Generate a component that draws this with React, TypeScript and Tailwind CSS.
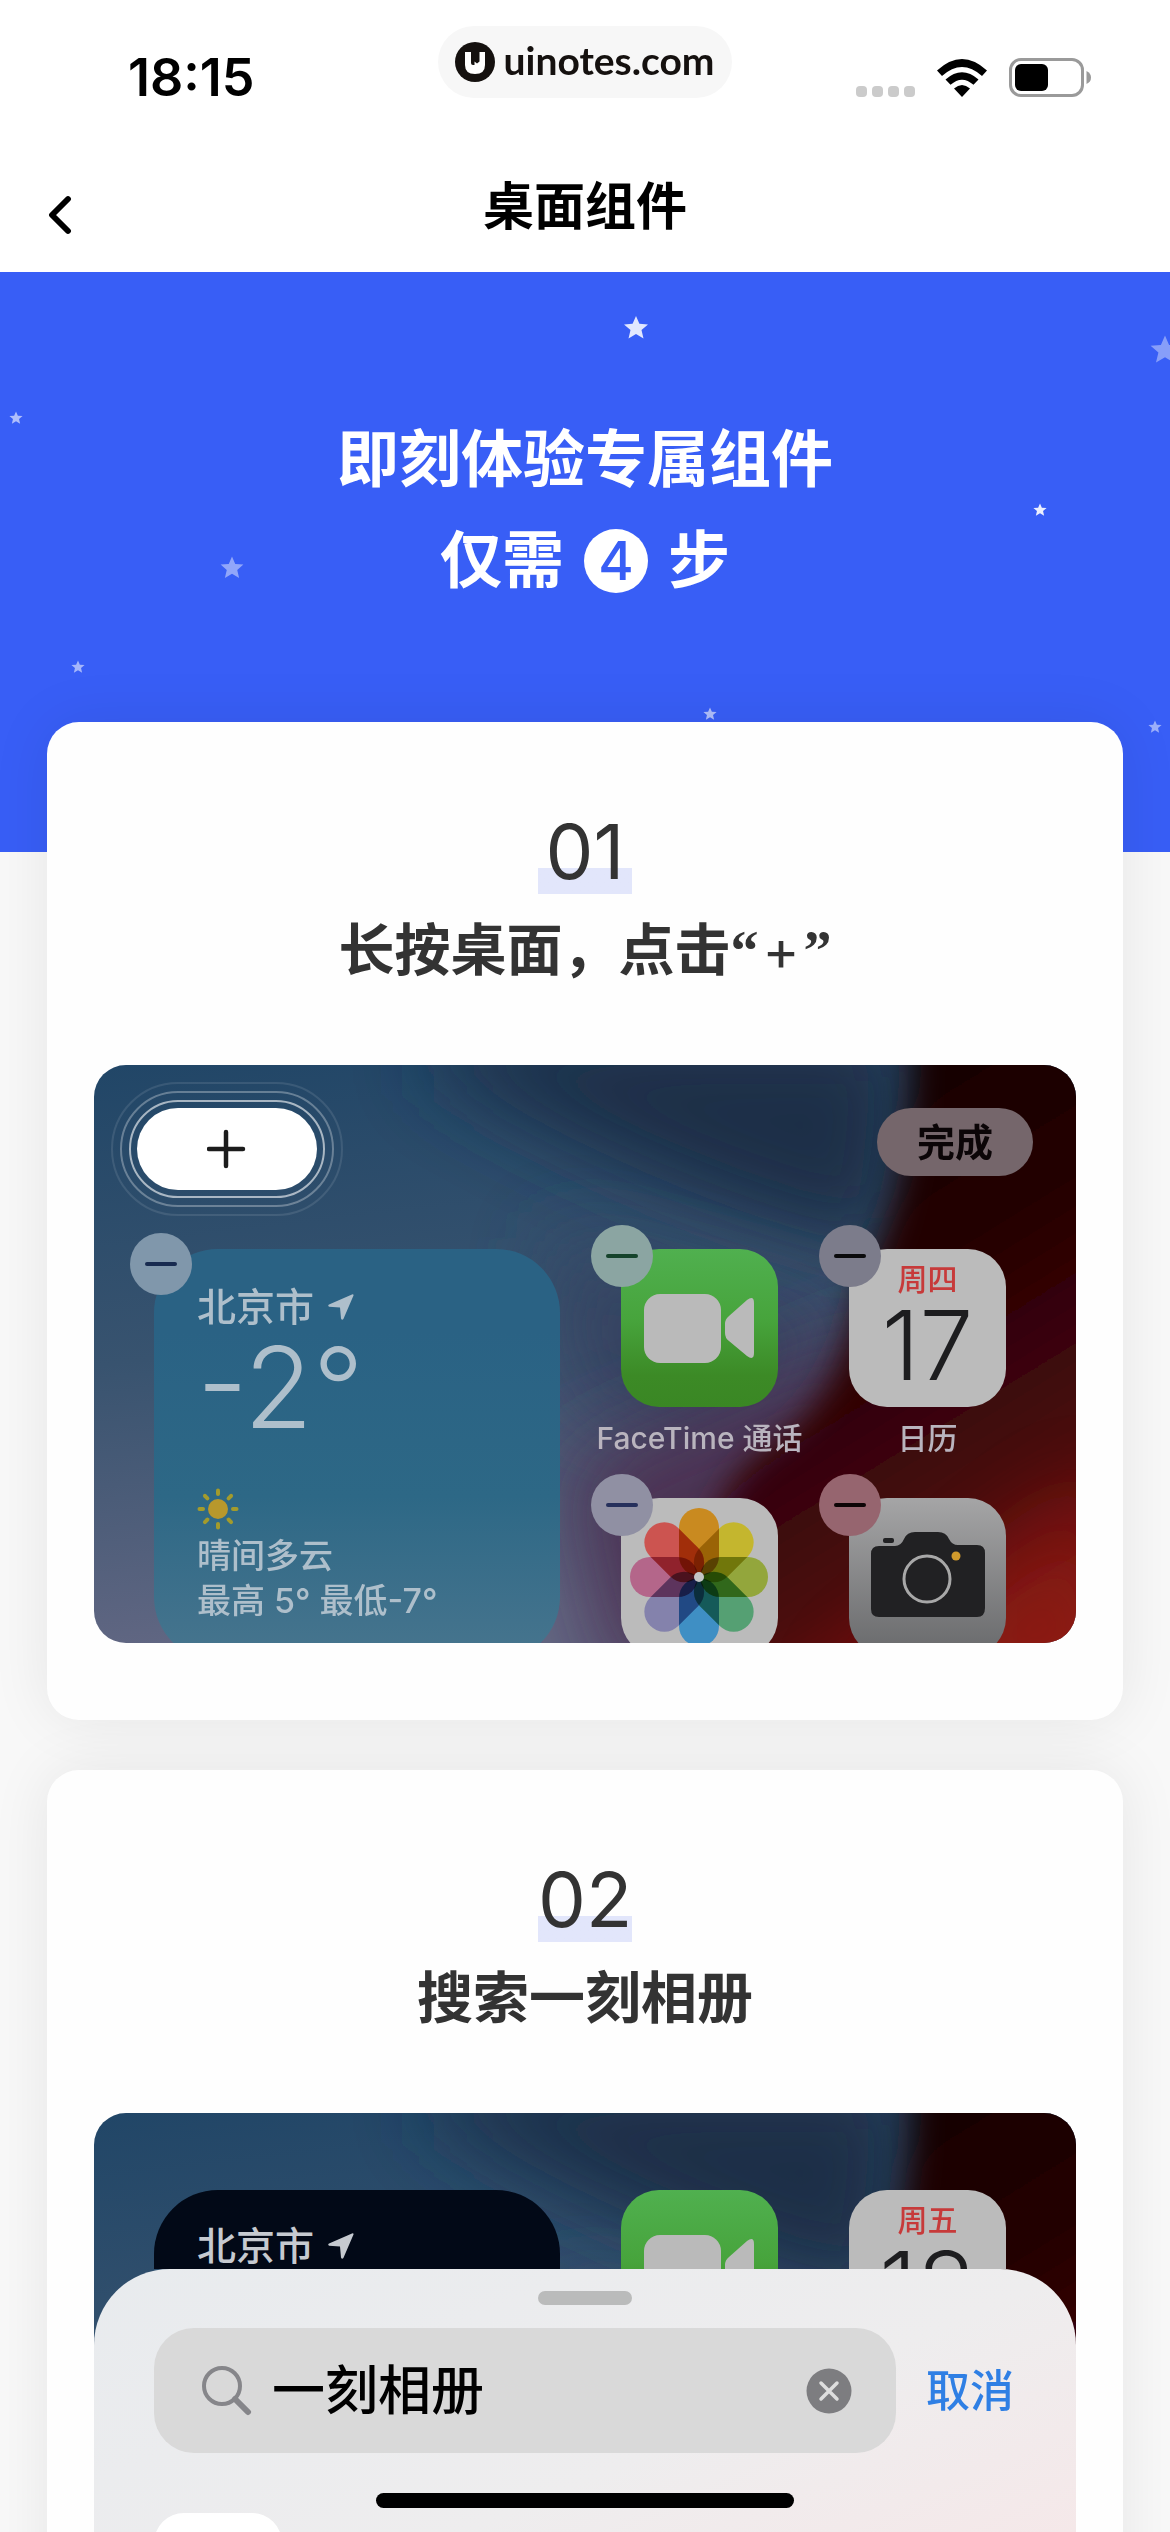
import type { ReactNode } from "react";
import { ChevronLeft } from "lucide-react";

/* Widget tutorial page: status bar, title bar, blue hero and the step cards.
   Each card shows a small dimmed home screen. */

const STAR = "M0 -12 L3.4 -4.2 L12 -3.6 L5.5 2 L7.5 10.5 L0 6 L-7.5 10.5 L-5.5 2 L-12 -3.6 L-3.4 -4.2 Z";

const STARS = [
  { x: 636, y: 56, s: 1, o: 0.85 },
  { x: 1165, y: 78, s: 1.2, o: 0.4 },
  { x: 16, y: 146, s: 0.55, o: 0.6 },
  { x: 1040, y: 238, s: 0.55, o: 0.9 },
  { x: 232, y: 296, s: 0.95, o: 0.45 },
  { x: 78, y: 395, s: 0.55, o: 0.55 },
  { x: 710, y: 442, s: 0.55, o: 0.6 },
  { x: 1155, y: 455, s: 0.55, o: 0.5 },
];

const PETALS = ["#c98a20", "#c4b62e", "#93a63c", "#55a073", "#3f8fc4", "#8482ac", "#b4668a", "#cc5450"];

function StatusBar() {
  return (
    <div className="grid grid-cols-[1fr_auto_1fr] items-start pt-[26px]">
      <span className="pl-32 pt-[22px] text-[52px] leading-[60px] font-semibold">18:15</span>
      <div className="flex h-[72px] items-center gap-2 rounded-full bg-[#f7f7f7] px-[17px]">
        <svg width="40" height="40" viewBox="0 0 40 40" aria-hidden="true">
          <circle cx="20" cy="20" r="20" fill="#15110f" />
          <path d="M10 10h6v11q0 2 2 2h1.500v-3.500l2.500 2 2.500-2v-9.500h5.500v13q0 9-10 9t-10-9z" fill="#fff" />
          <path d="M20 10v9.500h2.200v-9.500z" fill="#15110f" />
        </svg>
        <span className="pb-1 font-['Lato',sans-serif] text-[39px] leading-[48px] font-bold text-[#15110f]">uinotes.com</span>
      </div>
      <div className="flex items-center justify-end gap-[22px] pt-8 pr-[78px]">
        <div className="flex gap-[5px] pt-[26px]">
          {[0, 1, 2, 3].map((i) => (
            <span key={i} className="h-[11px] w-[11px] rounded-[4px] bg-[#cbcbcb]" />
          ))}
        </div>
        <svg width="50" height="38" viewBox="0 0 50 38" aria-label="Wi-Fi">
          <path d="M0 11.500Q25-11.500 50 11.500L45 17Q25-1 5 17Z" />
          <path d="M8.500 20.500Q25 6 41.500 20.500L36.500 25.800Q25 15.500 13.500 25.800Z" />
          <path d="M17 29.500Q25 22.500 33 29.500L25 38Z" />
        </svg>
        <svg width="83" height="40" viewBox="0 0 83 40" aria-label="Battery">
          <rect x="1.500" y="1.500" width="72" height="36" rx="10.500" fill="none" stroke="#9a9a9a" strokeWidth="3" />
          <rect x="6" y="6" width="33" height="27" rx="6" />
          <path d="M77.500 13v13q4.500-2 4.500-6.500t-4.500-6.500z" fill="#9a9a9a" />
        </svg>
      </div>
    </div>
  );
}

function TitleBar() {
  return (
    <div className="grid grid-cols-[1fr_auto_1fr] items-center pt-[59px] pb-[25px]">
      <button type="button" aria-label="返回" className="ml-7 w-16 pt-4">
        <ChevronLeft size={64} strokeWidth={2.2} />
      </button>
      <h1 className="text-[51px] leading-[72px] font-semibold">桌面组件</h1>
    </div>
  );
}

function Hero() {
  return (
    <section className="relative bg-[#385ef6] pt-[137px] pb-[241px] text-center text-[62px] leading-[101px] font-semibold text-white">
      <svg
        className="absolute inset-0 h-full w-full"
        viewBox="0 0 1170 580"
        preserveAspectRatio="xMidYMin slice"
        aria-hidden="true"
      >
        {STARS.map((s) => (
          <path key={s.x} d={STAR} fill="#fff" opacity={s.o} transform={`translate(${s.x} ${s.y}) scale(${s.s})`} />
        ))}
      </svg>
      <p>即刻体验专属组件</p>
      <p className="flex items-center justify-center gap-5">
        <span>仅需</span>
        <span className="h-16 w-16 rounded-full bg-white text-[54px] leading-16 font-medium text-[#385ef6]">4</span>
        <span>步</span>
      </p>
    </section>
  );
}

function Wallpaper({ id }: { id: string }) {
  return (
    <svg
      className="absolute inset-0 h-full w-full"
      viewBox="0 0 981 578"
      preserveAspectRatio="none"
      aria-hidden="true"
    >
      <defs>
        <linearGradient id={`${id}-base`} x1="0" y1="0" x2="0.2" y2="1">
          <stop offset="0" stopColor="#214667" />
          <stop offset="0.5" stopColor="#38536f" />
          <stop offset="1" stopColor="#626783" />
        </linearGradient>
        <linearGradient id={`${id}-red`} x1="0.4" y1="0" x2="0.8" y2="1">
          <stop offset="0" stopColor="#120000" />
          <stop offset="0.35" stopColor="#240104" />
          <stop offset="0.7" stopColor="#4b0a0b" />
          <stop offset="1" stopColor="#981b12" />
        </linearGradient>
        <filter id={`${id}-wide`} x="-50%" y="-50%" width="200%" height="200%">
          <feGaussianBlur stdDeviation="42" />
        </filter>
        <filter id={`${id}-soft`} x="-20%" y="-20%" width="140%" height="140%">
          <feGaussianBlur stdDeviation="16" />
        </filter>
      </defs>
      <rect width="981" height="578" fill={`url(#${id}-base)`} />
      <path d="M340 -40L820 -40L800 190Q600 150 340 0Z" fill="#1b2d46" filter={`url(#${id}-wide)`} />
      <path d="M460 170L760 250L640 400L470 330Z" fill="#364260" filter={`url(#${id}-wide)`} />
      <path d="M470 400L820 250L760 420L620 620L520 620Z" fill="#4b3352" filter={`url(#${id}-wide)`} />
      <path
        d="M815 -40Q820 120 765 220Q750 320 690 370Q610 420 610 520L600 640H1040V-40Z"
        fill={`url(#${id}-red)`}
        filter={`url(#${id}-soft)`}
      />
      <path d="M1000 420Q900 500 740 640H1040Z" fill="#8f1a13" opacity="0.7" filter={`url(#${id}-wide)`} />
    </svg>
  );
}

function RemoveButton({ className }: { className: string }) {
  return (
    <button
      type="button"
      aria-label="移除"
      className={`absolute flex h-[62px] w-[62px] items-center justify-center rounded-full ${className}`}
    >
      <span className="h-1 w-8 rounded-full bg-current" />
    </button>
  );
}

function LocationArrow() {
  return (
    <svg width="26" height="26" viewBox="0 0 26 26" fill="currentColor" aria-hidden="true">
      <path d="M25.500 1.500Q25.800 0 24 .4L1 10.500Q-.6 11.800 1.200 12.800L12 13.500L13 24.500Q14 26.600 15.400 25Z" />
    </svg>
  );
}

function City() {
  return (
    <p className="flex items-center gap-[14px] text-[39px] leading-[48px] font-medium">
      北京市
      <LocationArrow />
    </p>
  );
}

function FaceTimeIcon() {
  return (
    <svg className="rounded-[38px]" width="157" height="158" viewBox="0 0 157 158" aria-label="FaceTime">
      <defs>
        <linearGradient id="ft" x1="0" y1="0" x2="0" y2="1">
          <stop offset="0" stopColor="#50b04f" />
          <stop offset="0.45" stopColor="#47a43c" />
          <stop offset="0.8" stopColor="#3c8a26" />
          <stop offset="1" stopColor="#3a8724" />
        </linearGradient>
      </defs>
      <rect width="157" height="158" fill="url(#ft)" />
      <rect x="23" y="45" width="77" height="69" rx="16" fill="#bababa" />
      <path
        d="M104 75Q104 70 108 67L126 51Q133 46 133 54V104Q133 112 126 107L108 92Q104 89 104 84Z"
        fill="#bababa"
      />
    </svg>
  );
}

function CalendarIcon({ weekday, day }: { weekday: string; day: string }) {
  return (
    <div className="flex h-[158px] w-[157px] flex-col items-center rounded-[38px] bg-[#bbbbbb]">
      <span className="pt-3 text-[30px] leading-9 font-medium text-[#c73a3a]">{weekday}</span>
      <span className="text-[96px] leading-[96px] font-light text-[#1d1d1f]">{day}</span>
    </div>
  );
}

function PhotosIcon() {
  return (
    <svg className="rounded-[38px]" width="157" height="158" viewBox="0 0 157 158" aria-label="照片">
      <rect width="157" height="158" fill="#bbbbbb" />
      <g transform="translate(78 79)" className="isolate">
        {PETALS.map((c, i) => (
          <rect
            key={c}
            x="-20"
            y="-69"
            width="40"
            height="68"
            rx="20"
            fill={c}
            transform={`rotate(${i * 45})`}
            className="mix-blend-multiply"
          />
        ))}
        <circle r="5" fill="#c4c4c4" />
      </g>
    </svg>
  );
}

function CameraIcon() {
  return (
    <svg className="rounded-[38px]" width="157" height="158" viewBox="0 0 157 158" aria-label="相机">
      <defs>
        <linearGradient id="cam" x1="0" y1="0" x2="0" y2="1">
          <stop offset="0" stopColor="#a5a5a6" />
          <stop offset="1" stopColor="#68696b" />
        </linearGradient>
      </defs>
      <rect width="157" height="158" fill="url(#cam)" />
      <path
        d="M30 48H46Q52 48 55 41Q58 34 66 34H89Q97 34 100 41Q103 47 109 47H128Q136 47 136 55V110Q136 119 128 119H30Q22 119 22 111V56Q22 48 30 48Z"
        fill="#212123"
      />
      <rect x="34" y="40" width="11" height="5" rx="2" fill="#212123" />
      <circle cx="78" cy="81" r="23" fill="none" stroke="#a8a8a8" strokeWidth="3" />
      <circle cx="107" cy="58" r="4.500" fill="#d09a2c" />
    </svg>
  );
}

function AppTile({ label, remove, children }: { label?: string; remove: string; children: ReactNode }) {
  return (
    <div className="relative flex w-[157px] flex-col items-center">
      {children}
      <RemoveButton className={`-top-6 -left-[30px] ${remove}`} />
      {label && <span className="pt-[13px] text-[30px] leading-9 font-medium whitespace-nowrap text-[#b9b4be]">{label}</span>}
    </div>
  );
}

function SunIcon() {
  return (
    <svg width="42" height="42" viewBox="0 0 42 42" aria-hidden="true">
      <circle cx="21" cy="21" r="10" fill="#b8982c" />
      {[0, 45, 90, 135, 180, 225, 270, 315].map((a) => (
        <path key={a} d="M21 2.500V6" stroke="#a39b2c" strokeWidth="4" strokeLinecap="round" transform={`rotate(${a} 21 21)`} />
      ))}
    </svg>
  );
}

function AddWidgetShot() {
  return (
    <div className="relative h-[578px] overflow-hidden rounded-[32px]">
      <Wallpaper id="w1" />
      <div className="relative flex items-start justify-between px-[43px] pt-[43px]">
        <button
          type="button"
          aria-label="添加"
          className="relative flex h-[82px] w-[180px] items-center justify-center rounded-full bg-white"
        >
          <span className="absolute -inset-2 rounded-full border-2 border-white/60" />
          <span className="absolute -inset-[17px] rounded-full border-2 border-white/30" />
          <span className="absolute -inset-[26px] rounded-full border-2 border-white/10" />
          <svg width="40" height="40" viewBox="0 0 40 40" stroke="#1c1c1c" strokeWidth="4.500" strokeLinecap="round" aria-hidden="true">
            <path d="M2 20H36M19 3V37" />
          </svg>
        </button>
        <button
          type="button"
          className="h-[68px] w-[156px] rounded-full bg-[#75666b] text-[38px] leading-[64px] font-semibold text-[#0b0507]"
        >
          完成
        </button>
      </div>
      <div className="relative flex justify-between pt-[59px] pr-[70px] pl-[60px]">
        <div className="relative h-[412px] w-[406px] rounded-[64px] bg-linear-to-b from-[#2a6284] from-20% via-[#2d6886] via-60% to-[#47758e] pt-[34px] pl-[43px] text-[#aebfcb]">
          <RemoveButton className="-top-4 -left-6 bg-[#8097ab] text-[#182b50]" />
          <City />
          <p className="text-[112px] leading-[112px] font-light">-2°</p>
          <div className="pt-[45px]">
            <SunIcon />
          </div>
          <p className="pt-1 text-[34px] leading-[44px] font-medium">晴间多云</p>
          <p className="text-[34px] leading-[46px] font-medium">最高 5° 最低-7°</p>
        </div>
        <div className="grid grid-cols-2 content-start gap-x-[71px] gap-y-[42px]">
          <AppTile label="FaceTime 通话" remove="bg-[#8ba5a2] text-[#15432b]">
            <FaceTimeIcon />
          </AppTile>
          <AppTile label="日历" remove="bg-[#7c7c8b] text-[#0a0a0c]">
            <CalendarIcon weekday="周四" day="17" />
          </AppTile>
          <AppTile remove="bg-[#9090a3] text-[#26305c]">
            <PhotosIcon />
          </AppTile>
          <AppTile remove="bg-[#96656f] text-[#0d0506]">
            <CameraIcon />
          </AppTile>
        </div>
      </div>
    </div>
  );
}

function SearchShot() {
  return (
    <div className="relative h-[578px] overflow-hidden rounded-[32px]">
      <Wallpaper id="w2" />
      <div className="relative flex h-[156px] justify-between overflow-hidden pt-[77px] pr-[70px] pl-[60px]">
        <div className="h-[406px] w-[406px] rounded-[64px] bg-[#020917] pt-8 pl-[43px] text-[#c6cad0]">
          <City />
        </div>
        <div className="grid grid-cols-2 content-start gap-x-[71px]">
          <FaceTimeIcon />
          <CalendarIcon weekday="周五" day="18" />
        </div>
      </div>
      <div className="relative h-[422px] rounded-t-[76px] bg-linear-to-br from-[#e8ebee] via-[#eeedee] via-50% to-[#f9e5e6] px-[60px] pt-[22px]">
        <div className="mx-auto h-[14px] w-[94px] rounded-full bg-[#babbbb]" />
        <div className="flex items-center gap-[30px] pt-[23px]">
          <label className="flex h-[125px] min-w-0 flex-1 items-center rounded-[40px] bg-[#d9d9d9] pr-11 pl-12">
            <svg width="50" height="50" viewBox="0 0 50 50" fill="none" stroke="#86868a" strokeLinecap="round" aria-hidden="true">
              <circle cx="20" cy="20" r="18" strokeWidth="4" />
              <path d="M33 33L46 46" strokeWidth="6" />
            </svg>
            <input
              type="text"
              aria-label="搜索小组件"
              defaultValue="一刻相册"
              className="ml-5 min-w-0 flex-1 bg-transparent text-[53px] leading-[72px] font-medium text-black outline-none"
            />
            <button type="button" aria-label="清除">
              <svg width="46" height="46" viewBox="0 0 46 46" aria-hidden="true">
                <circle cx="23" cy="23" r="22.500" fill="#7d7d80" />
                <path d="M15 15L31 31M31 15L15 31" stroke="#dedede" strokeWidth="3.500" strokeLinecap="round" />
              </svg>
            </button>
          </label>
          <button type="button" className="pr-[2px] text-[44px] leading-[60px] font-medium text-[#2f7fe4]">
            取消
          </button>
        </div>
        <div className="mt-[60px] h-32 w-32 rounded-[30px] bg-white" />
      </div>
    </div>
  );
}

function StepCard({ n, title, children }: { n: string; title: ReactNode; children: ReactNode }) {
  return (
    <article className="rounded-[32px] bg-[#fefefe] px-[47px] pt-[92px] pb-[77px] text-center text-[#333] shadow-[0_0_60px_rgba(0,0,0,0.08)]">
      <p className="mx-auto w-[94px] bg-linear-to-b from-transparent from-67% to-[#e2e6fb] to-67% pb-[6px] text-[76px] leading-[74px] font-normal">
        {n}
      </p>
      <h2 className="pt-[18px] pb-[77px] text-[56px] leading-[76px] font-semibold">{title}</h2>
      <div className="text-left">{children}</div>
    </article>
  );
}

function Quoted({ children }: { children: ReactNode }) {
  return (
    <span className="font-['Liberation_Serif',serif] leading-none">
      “<span className="px-1 font-['Inter',sans-serif] font-normal">{children}</span>”
    </span>
  );
}

export default function App() {
  return (
    <div
      lang="zh-CN"
      className="relative h-screen overflow-hidden bg-[#f8f8f8] font-['Inter','Noto_Sans_CJK_SC',sans-serif] text-black"
    >
      <header className="bg-white">
        <StatusBar />
        <TitleBar />
      </header>
      <main>
        <Hero />
        <div className="relative -mt-[130px] flex flex-col gap-[50px] px-[47px]">
          <StepCard
            n="01"
            title={
              <>
                长按桌面，点击<Quoted>+</Quoted>
              </>
            }
          >
            <AddWidgetShot />
          </StepCard>
          <StepCard n="02" title="搜索一刻相册">
            <SearchShot />
          </StepCard>
        </div>
      </main>
      <div className="absolute bottom-6 left-1/2 h-[15px] w-[418px] -translate-x-1/2 rounded-full bg-black" />
    </div>
  );
}
